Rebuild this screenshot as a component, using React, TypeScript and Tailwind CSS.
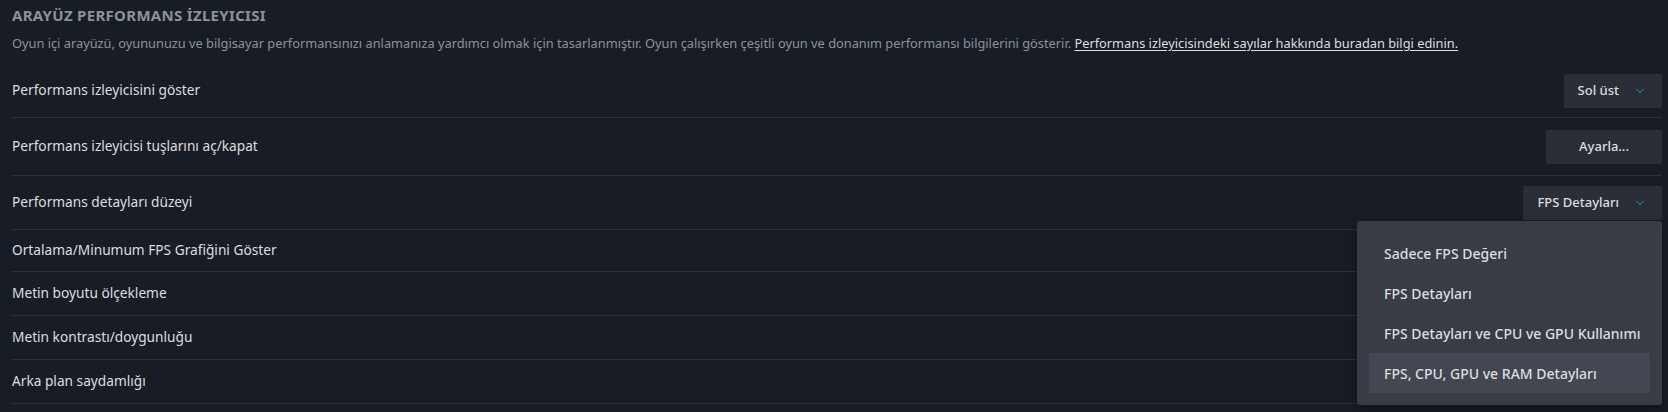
import { ChevronDown } from "lucide-react";

const font = "font-['Noto_Sans',_'Open_Sans',_sans-serif]";

const rows = [
  { label: "Performans izleyicisini göster", h: "h-[54px]", control: "select", value: "Sol üst" },
  { label: "Performans izleyicisi tuşlarını aç/kapat", h: "h-[58px]", control: "button", value: "Ayarla..." },
  { label: "Performans detayları düzeyi", h: "h-[54px]", control: "select", value: "FPS Detayları", open: true },
  { label: "Ortalama/Minumum FPS Grafiğini Göster", h: "h-[42px]" },
  { label: "Metin boyutu ölçekleme", h: "h-[44px]" },
  { label: "Metin kontrastı/doygunluğu", h: "h-[44px]" },
  { label: "Arka plan saydamlığı", h: "h-[44px]" },
];

const options = [
  "Sadece FPS Değeri",
  "FPS Detayları",
  "FPS Detayları ve CPU ve GPU Kullanımı",
  "FPS, CPU, GPU ve RAM Detayları",
];

export default function App() {
  return (
    <div className={`${font} min-h-[412px] w-full bg-[#181d25] pl-3 pr-[6px] text-[#dcdedf]`}>
      {/* Header */}
      <div className="flex h-[25px] items-end">
        <h2 className="text-[15px] font-bold uppercase leading-[20px] tracking-[0.3px] text-[#8b929a]">
          Arayüz Performans İzleyicisi
        </h2>
      </div>
      <p className="mt-[9px] h-[30px] text-[12.8px] leading-[18px] text-[#8b929a]">
        Oyun içi arayüzü, oyununuzu ve bilgisayar performansınızı anlamanıza yardımcı olmak için tasarlanmıştır. Oyun
        çalışırken çeşitli oyun ve donanım performansı bilgilerini gösterir.{" "}
        <a href="#" className="text-[#dcdedf] underline underline-offset-2">
          Performans izleyicisindeki sayılar hakkında buradan bilgi edinin.
        </a>
      </p>

      {/* Settings rows */}
      <div>
        {rows.map((row) => (
          <div
            key={row.label}
            className={`relative box-border flex ${row.h} items-center justify-between border-b border-[#2c3039]`}
          >
            <span className="text-[13.7px]">{row.label}</span>

            {row.control === "select" && (
              <button className="flex h-[34px] items-center rounded-[2px] bg-[#2a2e36] pl-[14px] pr-[16px] text-[13px] font-medium text-[#dcdedf]">
                {row.value}
                <ChevronDown className="ml-[15px] h-[12px] w-[12px] text-[#1a9fff]" strokeWidth={2} />
              </button>
            )}
            {row.control === "button" && (
              <button className="flex h-[34px] w-[116px] items-center justify-center rounded-[2px] bg-[#2a2e36] text-[13px] font-medium text-[#dcdedf]">
                {row.value}
              </button>
            )}

            {row.open && (
              <div className="absolute right-0 top-[45px] z-10 w-[305px] rounded-[3px] bg-[#383c45] px-3 py-3 shadow-[0_4px_12px_rgba(0,0,0,0.45)]">
                {options.map((opt, i) => (
                  <div
                    key={opt}
                    className={`flex h-[40px] items-center pl-[15px] text-[14px] font-medium text-[#dcdedf] ${
                      i === options.length - 1 ? "bg-[#424751]" : ""
                    }`}
                  >
                    {opt}
                  </div>
                ))}
              </div>
            )}
          </div>
        ))}
      </div>
    </div>
  );
}
